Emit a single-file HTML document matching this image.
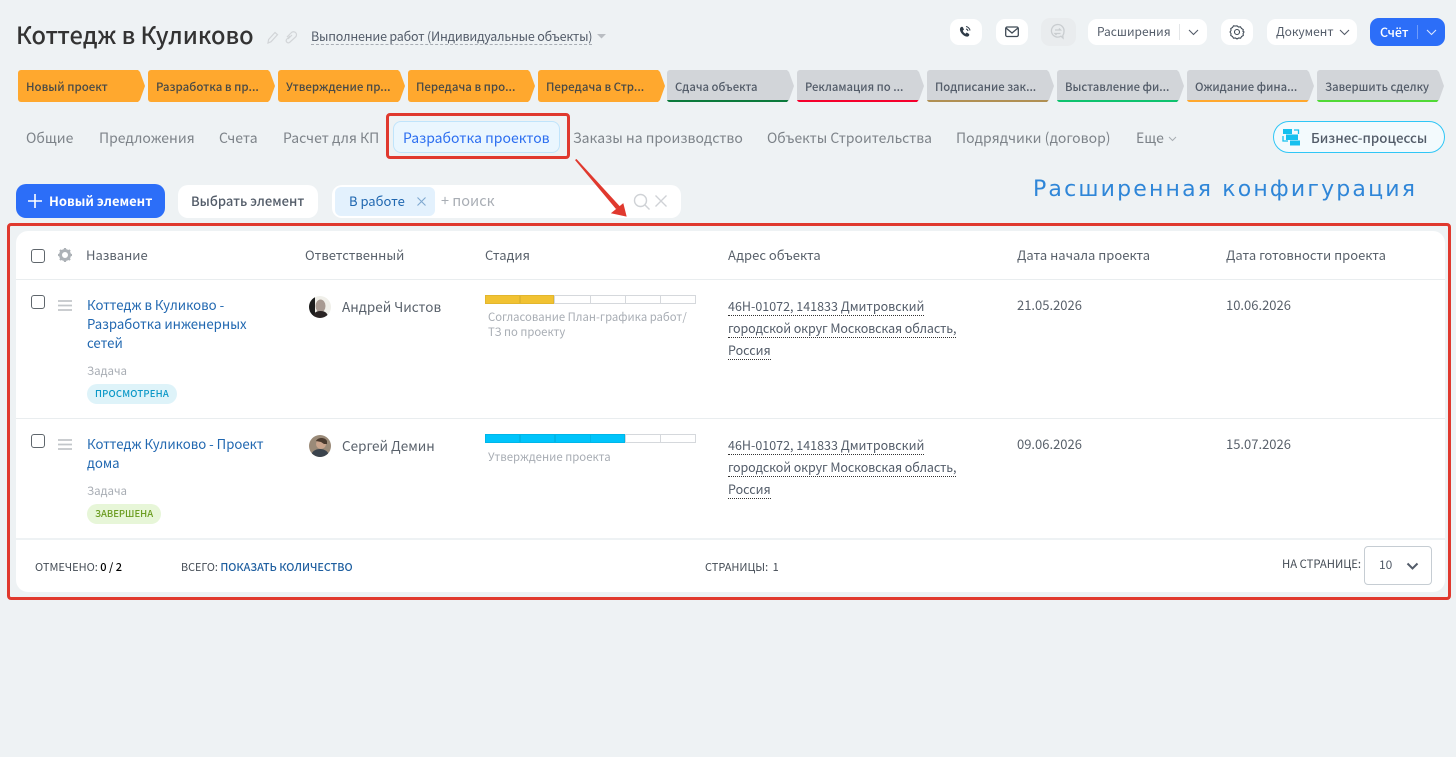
<!DOCTYPE html>
<html lang="ru"><head><meta charset="utf-8"><title>Коттедж в Куликово</title>
<style>
html,body{margin:0;padding:0}
body{width:1456px;height:757px;background:#eef2f4;position:relative;overflow:hidden;font-family:"Noto Sans CJK SC","Liberation Sans",sans-serif;color:#535c69;font-size:13px}
.t{position:absolute;white-space:nowrap;line-height:18px}
.b{position:absolute;box-sizing:border-box}
.w{background:#fff;border-radius:9px}
svg{position:absolute;overflow:visible}
.st{position:absolute;top:70px;width:127px;height:32px}
.st svg{left:0;top:0}
.st span{position:absolute;left:8px;top:9px;line-height:16px;font-size:11.5px;font-weight:500;white-space:nowrap;color:#4a4a45}
.st span.g{font-size:11.3px;color:#535c69}
.tab{position:absolute;top:129px;line-height:18px;font-size:14px;color:#7d8389;white-space:nowrap}
.th{position:absolute;top:246px;line-height:18px;font-size:13px;color:#59616b;white-space:nowrap}
.lnk{position:absolute;line-height:19px;font-size:13.2px;color:#2067b0;white-space:nowrap}
.addr{position:absolute;left:728px;font-size:12.5px;line-height:18px;color:#535c69;white-space:nowrap;border-bottom:1px dotted #333}
.cb{position:absolute;box-sizing:border-box;width:14px;height:14px;border:1.3px solid #5f666c;border-radius:3px;background:#fff}
.seg{position:absolute;box-sizing:border-box;height:9px;border:1px solid #d5d8dc;background:#fff}
.foot{position:absolute;top:559px;font-size:10.8px;line-height:16px;white-space:nowrap;color:#444c55}
</style></head><body>

<div class="t" style="left:16px;top:17px;font-size:23.6px;line-height:34px;font-weight:500;color:#333">Коттедж в Куликово</div>
<svg style="left:266px;top:30px" width="34" height="14" fill="none" stroke="#d2d5d8" stroke-width="1.2"><path d="M2 13l.6-3.500 6.400-7 2.500 2.200-6.400 7z"/><path d="M24 6l-3.500 3.500a2.200 2.200 0 0 0 3 3L29.500 7a3 3 0 0 0-4-4.500L21 7"/><path d="M26 5l-4 4"/></svg>
<div class="t" style="left:311px;top:27px;font-size:12.5px;letter-spacing:-.2px;color:#535c69;border-bottom:1px dashed #a8adb4;line-height:17px">Выполнение работ (Индивидуальные объекты)</div>
<svg style="left:597px;top:34px" width="10" height="6"><path d="M0 0h9L4.500 4.500z" fill="#b9bdc2"/></svg>

<div class="b w" style="left:950px;top:19px;width:32px;height:26px"></div>
<svg style="left:958px;top:25px" width="14" height="14" fill="none"><path d="M2.500 2.500c1-1 2-1 2.500 0l1 2-1.200 1.200c.5 1.500 1.500 2.500 2.700 3l1.200-1.200 2 1.200c.8.500.8 1.500 0 2.300-1 1-3 1-5.500-1S1 4.500 2.500 2.500z" fill="#2f3b47"/><path d="M8 1.500c2 .3 3.700 2 4 4M8 4c1 .2 1.800 1 2 2" stroke="#2f3b47" stroke-width="1"/></svg>
<div class="b w" style="left:996px;top:19px;width:32px;height:26px"></div>
<svg style="left:1005px;top:26px" width="14" height="12" fill="none" stroke="#3f4a55" stroke-width="1.300"><rect x=".7" y="1" width="12.600" height="9.500" rx="1.500"/><path d="M1 2l6 5 6-5"/></svg>
<div class="b" style="left:1041px;top:18px;width:35px;height:28px;background:#e9ecee;border-radius:9px"></div>
<svg style="left:1050px;top:24px" width="16" height="16" fill="none" stroke="#c9cdd0" stroke-width="1.300"><path d="M13 14l-2-1.800A6.300 6.300 0 1 1 14 7.500c0 1.700-.4 3-1.200 4z"/><path d="M5 6h5.500L9 4.500M10.500 9.500H5L6.500 11"/></svg>
<div class="b w" style="left:1088px;top:19px;width:119px;height:26px"></div>
<div class="t" style="left:1097px;top:23px;font-size:12px;color:#535c69">Расширения</div>
<div class="b" style="left:1179px;top:24px;width:1px;height:16px;background:#e4e6e8"></div>
<svg style="left:1188px;top:29px" width="11" height="7" fill="none" stroke="#535c69" stroke-width="1.100"><path d="M1 1l4.500 4.500L10 1"/></svg>
<div class="b w" style="left:1221px;top:19px;width:32px;height:26px"></div>
<svg style="left:1230px;top:25px" width="14" height="14" fill="none" stroke="#3f4a55" stroke-width="1.100"><path d="M7 .8l1.500 1.200 2-.2 1 1.700 1.700 1-.2 2L14 7l-.9 1.500.2 2-1.700 1-1 1.700-2-.2L7 14l-1.500-1-2 .2-1-1.700-1.700-1 .2-2L0 7l1-1.500-.2-2 1.700-1 1-1.700 2 .2z"/><circle cx="7" cy="7" r="2.500"/></svg>
<div class="b w" style="left:1267px;top:19px;width:90px;height:26px"></div>
<div class="t" style="left:1276px;top:23px;font-size:12px;color:#535c69">Документ</div>
<svg style="left:1339px;top:29px" width="11" height="7" fill="none" stroke="#535c69" stroke-width="1.100"><path d="M1 1l4.500 4.500L10 1"/></svg>
<div class="b" style="left:1370px;top:18px;width:75px;height:28px;background:#2c6ef8;border-radius:9px"></div>
<div class="t" style="left:1380px;top:23px;font-size:12.5px;font-weight:500;color:#fff">Счёт</div>
<div class="b" style="left:1417px;top:25px;width:1px;height:14px;background:#6f9cfa"></div>
<svg style="left:1426px;top:29px" width="11" height="7" fill="none" stroke="#dbe6fe" stroke-width="1.100"><path d="M1 1l4.500 4.500L10 1"/></svg>

<div class="st" style="left:18px"><svg width="127" height="32"><path d="M3 0H120l2 2 5 14-5 14-2 2H3a3 3 0 0 1-3-3V3a3 3 0 0 1 3-3z" fill="#ffa82e"/></svg><span>Новый проект</span></div>
<div class="st" style="left:148px"><svg width="127" height="32"><path d="M3 0H120l2 2 5 14-5 14-2 2H3a3 3 0 0 1-3-3V3a3 3 0 0 1 3-3z" fill="#ffa82e"/></svg><span>Разработка в пр...</span></div>
<div class="st" style="left:278px"><svg width="127" height="32"><path d="M3 0H120l2 2 5 14-5 14-2 2H3a3 3 0 0 1-3-3V3a3 3 0 0 1 3-3z" fill="#ffa82e"/></svg><span>Утверждение пр...</span></div>
<div class="st" style="left:408px"><svg width="127" height="32"><path d="M3 0H120l2 2 5 14-5 14-2 2H3a3 3 0 0 1-3-3V3a3 3 0 0 1 3-3z" fill="#ffa82e"/></svg><span>Передача в про...</span></div>
<div class="st" style="left:538px"><svg width="127" height="32"><path d="M3 0H120l2 2 5 14-5 14-2 2H3a3 3 0 0 1-3-3V3a3 3 0 0 1 3-3z" fill="#ffa82e"/></svg><span>Передача в Стр...</span></div>
<div class="st" style="left:667px"><svg width="127" height="32"><path d="M3 0H120l2 2 5 14-5 14-2 2H3a3 3 0 0 1-3-3V3a3 3 0 0 1 3-3z" fill="#d2d5d9"/><path d="M0 30H121.500L120 32H3a3 3 0 0 1-3-2z" fill="#0b7a3b"/></svg><span class="g">Сдача объекта</span></div>
<div class="st" style="left:797px"><svg width="127" height="32"><path d="M3 0H120l2 2 5 14-5 14-2 2H3a3 3 0 0 1-3-3V3a3 3 0 0 1 3-3z" fill="#d2d5d9"/><path d="M0 30H121.500L120 32H3a3 3 0 0 1-3-2z" fill="#f5002c"/></svg><span class="g">Рекламация по ...</span></div>
<div class="st" style="left:927px"><svg width="127" height="32"><path d="M3 0H120l2 2 5 14-5 14-2 2H3a3 3 0 0 1-3-3V3a3 3 0 0 1 3-3z" fill="#d2d5d9"/><path d="M0 30H121.500L120 32H3a3 3 0 0 1-3-2z" fill="#b09053"/></svg><span class="g">Подписание зак...</span></div>
<div class="st" style="left:1057px"><svg width="127" height="32"><path d="M3 0H120l2 2 5 14-5 14-2 2H3a3 3 0 0 1-3-3V3a3 3 0 0 1 3-3z" fill="#d2d5d9"/><path d="M0 30H121.500L120 32H3a3 3 0 0 1-3-2z" fill="#0ec26e"/></svg><span class="g">Выставление фи...</span></div>
<div class="st" style="left:1187px"><svg width="127" height="32"><path d="M3 0H120l2 2 5 14-5 14-2 2H3a3 3 0 0 1-3-3V3a3 3 0 0 1 3-3z" fill="#d2d5d9"/><path d="M0 30H121.500L120 32H3a3 3 0 0 1-3-2z" fill="#ffa82e"/></svg><span class="g">Ожидание фина...</span></div>
<div class="st" style="left:1317px"><svg width="127" height="32"><path d="M3 0H120l2 2 5 14-5 14-2 2H3a3 3 0 0 1-3-3V3a3 3 0 0 1 3-3z" fill="#d2d5d9"/><path d="M0 30H121.500L120 32H3a3 3 0 0 1-3-2z" fill="#50d936"/></svg><span class="g">Завершить сделку</span></div>

<div class="b" style="left:386px;top:113px;width:184px;height:46px;border:3px solid #e0392e;border-radius:4px"></div>
<div class="b" style="left:393px;top:121px;width:167px;height:32px;background:#eaf6fe;border:1px solid #c0e4fb;border-radius:8px"></div>
<div class="tab" style="left:26px">Общие</div>
<div class="tab" style="left:99px">Предложения</div>
<div class="tab" style="left:219px">Счета</div>
<div class="tab" style="left:283px">Расчет для КП</div>
<div class="tab" style="left:403px;color:#2c6ef0">Разработка проектов</div>
<div class="tab" style="left:573px">Заказы на производство</div>
<div class="tab" style="left:767px;font-size:13.900px">Объекты Строительства</div>
<div class="tab" style="left:956px">Подрядчики (договор)</div>
<div class="tab" style="left:1136px">Еще</div>
<svg style="left:1168px;top:136px" width="9" height="6" fill="none" stroke="#a8adb2"><path d="M1 1l3.500 3.500L8 1"/></svg>

<div class="b" style="left:1273px;top:121px;width:172px;height:32px;border:1px solid #2fc6f6;border-radius:16px;background:#f3fafd"></div>
<svg style="left:1282px;top:128px" width="19" height="18"><path d="M1 1h9v5H1zM4 6.500h12v5.500H4zM8 12.500h10v5H8z" fill="#15c0ef"/><path d="M12 2h4.500v4M1 8v5h5" fill="none" stroke="#15c0ef" stroke-width="1.300"/></svg>
<div class="t" style="left:1311px;top:129px;font-size:13.3px;font-weight:500;color:#535c69">Бизнес-процессы</div>

<div class="b" style="left:16px;top:184px;width:149px;height:34px;background:#2c6ef8;border-radius:10px"></div>
<svg style="left:28px;top:194px" width="14" height="14"><path d="M7 0v14M0 7h14" stroke="#fff" stroke-width="1.600"/></svg>
<div class="t" style="left:49px;top:192px;font-size:13px;font-weight:700;color:#fff">Новый элемент</div>
<div class="b w" style="left:178px;top:185px;width:140px;height:33px;border-radius:10px"></div>
<div class="t" style="left:191px;top:192px;font-size:13px;font-weight:500;color:#535c69">Выбрать элемент</div>
<div class="b w" style="left:332px;top:185px;width:349px;height:33px;border-radius:10px"></div>
<div class="b" style="left:335px;top:187px;width:100px;height:29px;background:#e3f1fd;border-radius:6px"></div>
<div class="t" style="left:349px;top:192px;font-size:13px;color:#2067b0">В работе</div>
<svg style="left:417px;top:197px" width="9" height="9" fill="none" stroke="#7fa8d0" stroke-width="1.100"><path d="M.5.5l8 8M8.500.5l-8 8"/></svg>
<div class="t" style="left:441px;top:192px;font-size:14.500px;color:#a8adb4">+ поиск</div>
<svg style="left:633px;top:193px" width="18" height="18" fill="none" stroke="#cfd2d6" stroke-width="1.400"><circle cx="7.500" cy="7.500" r="6"/><path d="M12 12l4.500 4.500"/></svg>
<svg style="left:655px;top:195px" width="12" height="12" fill="none" stroke="#cfd2d6" stroke-width="1.300"><path d="M.5.5l11 11M11.500.5l-11 11"/></svg>

<div class="t" style="left:1033px;top:173px;font-family:'DejaVu Sans',sans-serif;font-size:22px;line-height:34px;letter-spacing:2.17px;color:#2f86d8">Расширенная конфигурация</div>

<div class="b" style="left:7px;top:223px;width:1444px;height:377px;border:3px solid #e0392e;border-radius:4px"></div>
<div class="b" style="left:16px;top:231px;width:1429px;height:361px;background:#fff;border-radius:12px"></div>
<div class="b" style="left:16px;top:279px;width:1429px;height:1px;background:#e9edef"></div>
<div class="b" style="left:16px;top:418px;width:1429px;height:1px;background:#e9edef"></div>
<div class="b" style="left:16px;top:538px;width:1429px;height:2px;background:#eef2f4"></div>

<svg style="left:575px;top:159px" width="56" height="60"><path d="M0 1L1.500 0 45 47.500 41 50z" fill="#e0392e"/><path d="M51 57L48 45 37 54z" fill="#e0392e" stroke="#e0392e" stroke-width="1"/></svg>

<div class="cb" style="left:31px;top:249px"></div>
<svg style="left:58px;top:248px" width="14" height="14"><circle cx="7" cy="7" r="4.500" fill="none" stroke="#adb2b7" stroke-width="3"/><path d="M7 0v3M7 11v3M0 7h3M11 7h3M2 2l2 2M10 10l2 2M12 2l-2 2M4 10l-2 2" stroke="#adb2b7" stroke-width="2.200"/></svg>
<div class="th" style="left:86px">Название</div>
<div class="th" style="left:305px">Ответственный</div>
<div class="th" style="left:485px">Стадия</div>
<div class="th" style="left:728px">Адрес объекта</div>
<div class="th" style="left:1017px">Дата начала проекта</div>
<div class="th" style="left:1226px">Дата готовности проекта</div>

<div class="cb" style="left:31px;top:295px"></div>
<svg style="left:58px;top:300px" width="14" height="11"><path d="M0 1h14M0 5.500h14M0 10h14" stroke="#c2c6ca" stroke-width="1.700"/></svg>
<div class="lnk" style="left:87px;top:295px">Коттедж в Куликово -</div>
<div class="lnk" style="left:87px;top:314px">Разработка инженерных</div>
<div class="lnk" style="left:87px;top:333px">сетей</div>
<div class="t" style="left:87px;top:362px;font-size:11.500px;color:#a8adb4">Задача</div>
<div class="b" style="left:87px;top:384px;width:90px;height:20px;background:#def3f9;border-radius:10px"></div>
<div class="t" style="left:95px;top:384px;font-size:9.500px;letter-spacing:.2px;font-weight:500;color:#0b98c7">ПРОСМОТРЕНА</div>
<svg style="left:309px;top:296px" width="22" height="22"><defs><clipPath id="a1"><circle cx="11" cy="11" r="11"/></clipPath></defs><g clip-path="url(#a1)"><rect width="22" height="22" fill="#f0efe9"/><rect width="6" height="22" fill="#1c1c1c"/><ellipse cx="11.500" cy="10" rx="5" ry="6.500" fill="#a89a92"/><path d="M4 22c0-5 3-7 7.500-7S19 17 19 22z" fill="#2a2424"/></g></svg>
<div class="t" style="left:342px;top:297px;font-size:13.500px;color:#59616b">Андрей Чистов</div>
<div class="seg" style="left:485px;top:295px;width:35px;background:#f1c232;border-color:#e2b62e"></div>
<div class="seg" style="left:520px;top:295px;width:34px;background:#f1c232;border-color:#e2b62e"></div>
<div class="seg" style="left:554px;top:295px;width:37px"></div>
<div class="seg" style="left:590px;top:295px;width:36px"></div>
<div class="seg" style="left:625px;top:295px;width:36px"></div>
<div class="seg" style="left:660px;top:295px;width:36px"></div>
<div class="t" style="left:488px;top:310px;font-size:11.300px;line-height:15px;color:#a8adb4">Согласование План-графика работ/<br>ТЗ по проекту</div>
<div class="addr" style="left:728px;top:297px">46Н-01072, 141833 Дмитровский</div>
<div class="addr" style="left:728px;top:319px;letter-spacing:-.11px">городской округ Московская область,</div>
<div class="addr" style="left:728px;top:341px">Россия</div>
<div class="t" style="left:1017px;top:296px;font-size:13px;color:#59616b">21.05.2026</div>
<div class="t" style="left:1226px;top:296px;font-size:13px;color:#59616b">10.06.2026</div>

<div class="cb" style="left:31px;top:434px"></div>
<svg style="left:58px;top:439px" width="14" height="11"><path d="M0 1h14M0 5.500h14M0 10h14" stroke="#c2c6ca" stroke-width="1.700"/></svg>
<div class="lnk" style="left:87px;top:434px">Коттедж Куликово - Проект</div>
<div class="lnk" style="left:87px;top:453px">дома</div>
<div class="t" style="left:87px;top:482px;font-size:11.500px;color:#a8adb4">Задача</div>
<div class="b" style="left:87px;top:504px;width:74px;height:20px;background:#e7f6d8;border-radius:10px"></div>
<div class="t" style="left:95px;top:504px;font-size:9.500px;font-weight:500;color:#6a9c1f">ЗАВЕРШЕНА</div>
<svg style="left:309px;top:435px" width="22" height="22"><defs><clipPath id="a2"><circle cx="11" cy="11" r="11"/></clipPath></defs><g clip-path="url(#a2)"><rect width="22" height="22" fill="#9a8a78"/><circle cx="12" cy="9" r="5" fill="#c9a48c"/><path d="M7 6c2-4 9-4 11 0v3h-3l-3-2z" fill="#4a3a2e"/><path d="M2 22c0-6 5-8 9-8s9 2 9 8z" fill="#3a434c"/></g></svg>
<div class="t" style="left:342px;top:436px;font-size:13.500px;color:#59616b">Сергей Демин</div>
<div class="seg" style="left:485px;top:434px;width:35px;background:#00c4fb;border-color:#00b6e8"></div>
<div class="seg" style="left:520px;top:434px;width:35px;background:#00c4fb;border-color:#00b6e8"></div>
<div class="seg" style="left:555px;top:434px;width:36px;background:#00c4fb;border-color:#00b6e8"></div>
<div class="seg" style="left:590px;top:434px;width:35px;background:#00c4fb;border-color:#00b6e8"></div>
<div class="seg" style="left:625px;top:434px;width:36px"></div>
<div class="seg" style="left:660px;top:434px;width:36px"></div>
<div class="t" style="left:488px;top:450px;font-size:11.400px;line-height:15px;color:#a8adb4">Утверждение проекта</div>
<div class="addr" style="left:728px;top:436px">46Н-01072, 141833 Дмитровский</div>
<div class="addr" style="left:728px;top:458px;letter-spacing:-.11px">городской округ Московская область,</div>
<div class="addr" style="left:728px;top:480px">Россия</div>
<div class="t" style="left:1017px;top:435px;font-size:13px;color:#59616b">09.06.2026</div>
<div class="t" style="left:1226px;top:435px;font-size:13px;color:#59616b">15.07.2026</div>

<div class="foot" style="left:35px;font-size:11px">ОТМЕЧЕНО: <span style="color:#000;font-weight:500">0 / 2</span></div>
<div class="foot" style="left:181px">ВСЕГО: <span style="color:#1f5fa0;font-weight:500">ПОКАЗАТЬ КОЛИЧЕСТВО</span></div>
<div class="foot" style="left:705px;font-size:11px">СТРАНИЦЫ: <span style="margin-left:2px">1</span></div>
<div class="foot" style="left:1282px;top:556px;font-size:11.300px">НА СТРАНИЦЕ:</div>
<div class="b" style="left:1364px;top:546px;width:68px;height:39px;border:1px solid #c6cdd3;border-radius:4px;background:#fff"></div>
<div class="t" style="left:1379px;top:556px;font-size:12px;color:#535c69">10</div>
<svg style="left:1406px;top:562px" width="13" height="9" fill="none" stroke="#535c69" stroke-width="2"><path d="M1.500 1.500L6.500 6.500 11.500 1.500"/></svg>

</body></html>
